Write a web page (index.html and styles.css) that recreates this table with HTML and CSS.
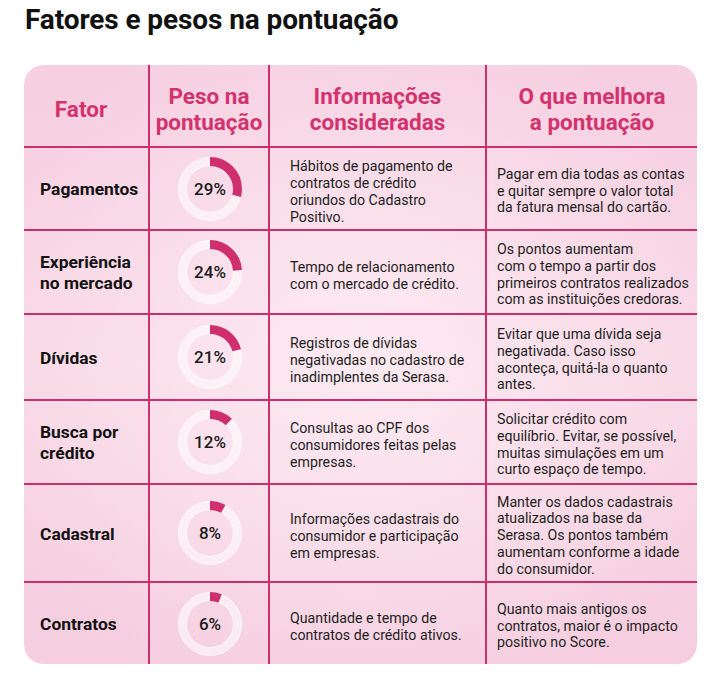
FILE: index.html
```html
<!DOCTYPE html>
<html lang="pt-BR">
<head>
<meta charset="utf-8">
<title>Fatores e pesos na pontuação</title>
<link rel="stylesheet" href="styles.css">
</head>
<body>
<main class="page">
  <h1 class="title">Fatores e pesos na pontuação</h1>
  <section class="card">
    <div class="cell head c1">Fator</div>
    <div class="cell head c2">Peso na<br>pontuação</div>
    <div class="cell head c3">Informações<br>consideradas</div>
    <div class="cell head c4">O que melhora<br>a pontuação</div>

    <div class="cell factor c1">Pagamentos</div>
    <div class="cell c2"><div class="donut">
      <svg viewBox="0 0 64 64" width="64" height="64"><circle class="ring" cx="32" cy="32" r="27.5"/><circle class="edge" cx="32" cy="32" r="31.5"/><circle class="edge" cx="32" cy="32" r="23.5"/><circle class="arc" cx="32" cy="32" r="27.5" stroke-dasharray="50.11 200" transform="rotate(-90 32 32)"/></svg>
      <span class="pct">29%</span></div></div>
    <div class="cell text c3">Hábitos de pagamento de<br>contratos de crédito<br>oriundos do Cadastro<br>Positivo.</div>
    <div class="cell text c4">Pagar em dia todas as contas<br>e quitar sempre o valor total<br>da fatura mensal do cartão.</div>

    <div class="cell factor c1">Experiência<br>no mercado</div>
    <div class="cell c2"><div class="donut">
      <svg viewBox="0 0 64 64" width="64" height="64"><circle class="ring" cx="32" cy="32" r="27.5"/><circle class="edge" cx="32" cy="32" r="31.5"/><circle class="edge" cx="32" cy="32" r="23.5"/><circle class="arc" cx="32" cy="32" r="27.5" stroke-dasharray="41.47 200" transform="rotate(-90 32 32)"/></svg>
      <span class="pct">24%</span></div></div>
    <div class="cell text c3">Tempo de relacionamento<br>com o mercado de crédito.</div>
    <div class="cell text c4">Os pontos aumentam<br>com o tempo a partir dos<br>primeiros contratos realizados<br>com as instituições credoras.</div>

    <div class="cell factor c1">Dívidas</div>
    <div class="cell c2"><div class="donut">
      <svg viewBox="0 0 64 64" width="64" height="64"><circle class="ring" cx="32" cy="32" r="27.5"/><circle class="edge" cx="32" cy="32" r="31.5"/><circle class="edge" cx="32" cy="32" r="23.5"/><circle class="arc" cx="32" cy="32" r="27.5" stroke-dasharray="36.29 200" transform="rotate(-90 32 32)"/></svg>
      <span class="pct">21%</span></div></div>
    <div class="cell text c3">Registros de dívidas<br>negativadas no cadastro de<br>inadimplentes da Serasa.</div>
    <div class="cell text c4">Evitar que uma dívida seja<br>negativada. Caso isso<br>aconteça, quitá-la o quanto<br>antes.</div>

    <div class="cell factor c1">Busca por<br>crédito</div>
    <div class="cell c2"><div class="donut">
      <svg viewBox="0 0 64 64" width="64" height="64"><circle class="ring" cx="32" cy="32" r="27.5"/><circle class="edge" cx="32" cy="32" r="31.5"/><circle class="edge" cx="32" cy="32" r="23.5"/><circle class="arc" cx="32" cy="32" r="27.5" stroke-dasharray="20.73 200" transform="rotate(-90 32 32)"/></svg>
      <span class="pct">12%</span></div></div>
    <div class="cell text c3">Consultas ao CPF dos<br>consumidores feitas pelas<br>empresas.</div>
    <div class="cell text c4">Solicitar crédito com<br>equilíbrio. Evitar, se possível,<br>muitas simulações em um<br>curto espaço de tempo.</div>

    <div class="cell factor c1">Cadastral</div>
    <div class="cell c2"><div class="donut">
      <svg viewBox="0 0 64 64" width="64" height="64"><circle class="ring" cx="32" cy="32" r="27.5"/><circle class="edge" cx="32" cy="32" r="31.5"/><circle class="edge" cx="32" cy="32" r="23.5"/><circle class="arc" cx="32" cy="32" r="27.5" stroke-dasharray="13.82 200" transform="rotate(-90 32 32)"/></svg>
      <span class="pct">8%</span></div></div>
    <div class="cell text c3">Informações cadastrais do<br>consumidor e participação<br>em empresas.</div>
    <div class="cell text c4">Manter os dados cadastrais<br>atualizados na base da<br>Serasa. Os pontos também<br>aumentam conforme a idade<br>do consumidor.</div>

    <div class="cell factor c1 last">Contratos</div>
    <div class="cell c2 last"><div class="donut">
      <svg viewBox="0 0 64 64" width="64" height="64"><circle class="ring" cx="32" cy="32" r="27.5"/><circle class="edge" cx="32" cy="32" r="31.5"/><circle class="edge" cx="32" cy="32" r="23.5"/><circle class="arc" cx="32" cy="32" r="27.5" stroke-dasharray="10.37 200" transform="rotate(-90 32 32)"/></svg>
      <span class="pct">6%</span></div></div>
    <div class="cell text c3 last">Quantidade e tempo de<br>contratos de crédito ativos.</div>
    <div class="cell text c4 last">Quanto mais antigos os<br>contratos, maior é o impacto<br>positivo no Score.</div>
  </section>
</main>
</body>
</html>
```

FILE: styles.css
```css
* { box-sizing: border-box; }

html, body {
  margin: 0;
  padding: 0;
  background: #ffffff;
}

body {
  font-family: Roboto, "Liberation Sans", Arial, sans-serif;
  color: #1c1c1c;
}

.page {
  padding: 4px 26px 0 24px;
}

.title {
  margin: 0 0 29px 1px;
  font-size: 28px;
  line-height: 32px;
  font-weight: 700;
  color: #111111;
  letter-spacing: -0.1px;
}

.card {
  width: 673px;
  display: grid;
  grid-template-columns: 126px 120px 217px 210px;
  grid-template-rows: 83px 83px 84px 86px 84px 98px 81px;
  border-radius: 20px;
  overflow: hidden;
  background:
    radial-gradient(ellipse 60% 60% at 50% 50%, rgba(253, 236, 243, 0.9) 0%, rgba(253, 236, 243, 0) 100%),
    linear-gradient(180deg, #f6cfe0 0%, #f8d7e5 50%, #f5cdde 100%);
}

.cell {
  display: flex;
  align-items: center;
  border-bottom: 2px solid #cd2f6c;
  border-right: 2px solid #cd2f6c;
}

.cell.c4 { border-right: none; }
.cell.last { border-bottom: none; }

.head {
  justify-content: center;
  text-align: center;
  color: #d3326f;
  font-size: 22.5px;
  line-height: 26px;
  font-weight: 700;
  padding-top: 6px;
}

.head.c1 { padding-right: 10px; }

.factor {
  padding-left: 16px;
  font-size: 17.4px;
  line-height: 21px;
  font-weight: 700;
  color: #121212;
  padding-top: 2px;
}

.c2 { justify-content: center; }

.text {
  font-size: 14.2px;
  line-height: 16.8px;
  color: #1e1e1e;
}

.text.c3 { padding-left: 20px; padding-top: 7px; }
.text.c4 { padding-left: 10px; padding-top: 5px; }

.donut {
  position: relative;
  width: 64px;
  height: 64px;
  margin-left: 2px;
}

.donut svg { display: block; }

.ring {
  fill: none;
  stroke: rgba(255, 255, 255, 0.55);
  stroke-width: 8;
}

.edge {
  fill: none;
  stroke: rgba(255, 255, 255, 0.8);
  stroke-width: 1;
}

.arc {
  fill: none;
  stroke: #cf2f6c;
  stroke-width: 9;
}

.pct {
  position: absolute;
  inset: 0;
  display: flex;
  align-items: center;
  justify-content: center;
  font-size: 17px;
  font-weight: 500;
  color: #1a1a1a;
}
```
